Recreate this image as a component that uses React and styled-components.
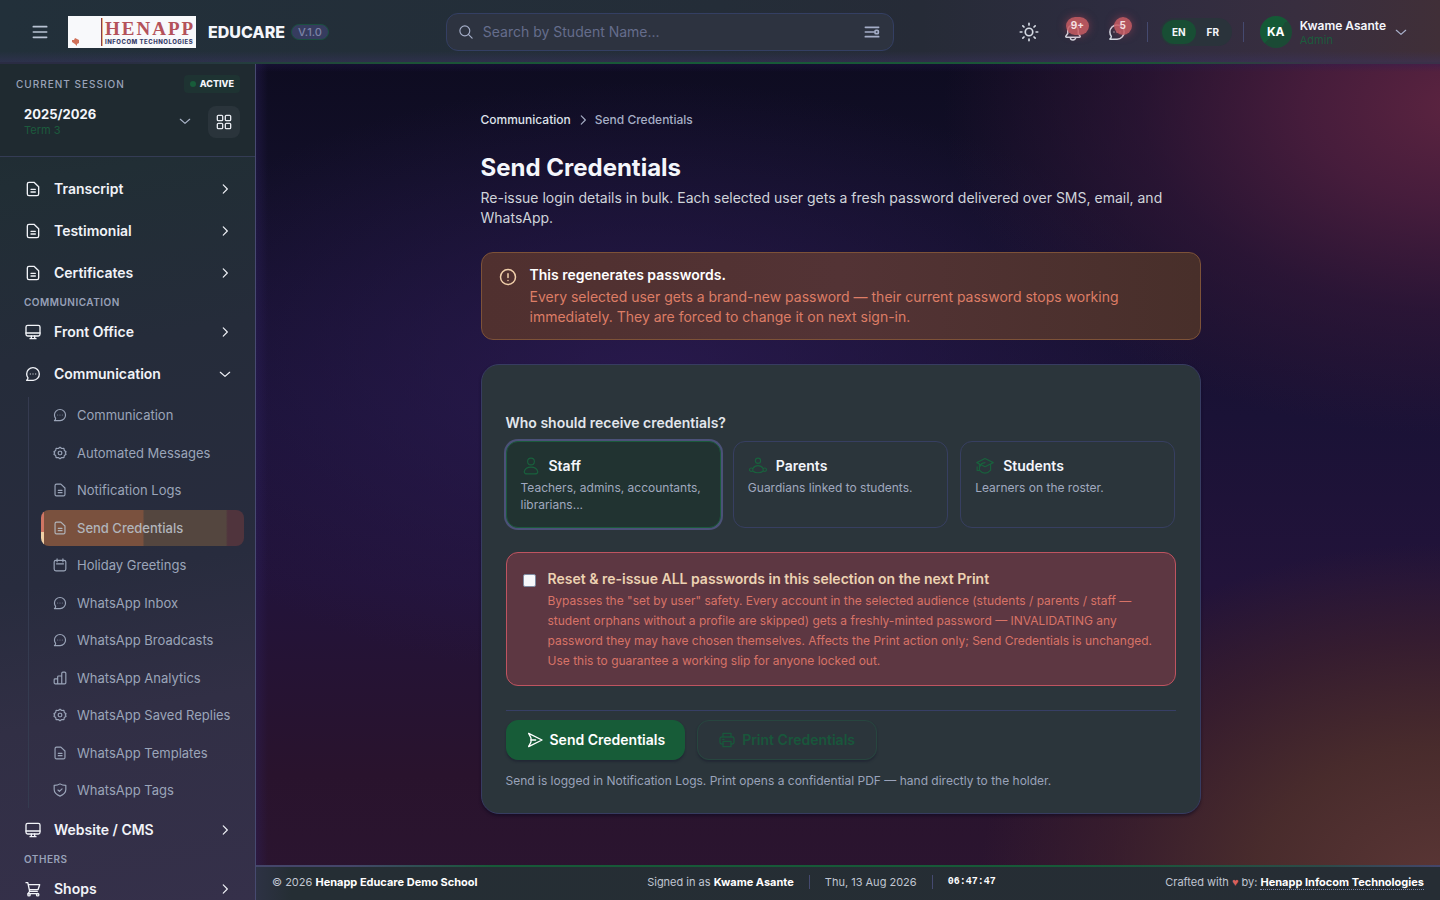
import React from 'react'
import styled, { createGlobalStyle, css } from 'styled-components'

const GlobalStyle = createGlobalStyle`
  *, *::before, *::after {
    box-sizing: border-box;
  }
  body {
    margin: 0;
    font-family: Inter, 'Liberation Sans', sans-serif;
    font-size: 14px;
    line-height: 20px;
    color: #f4f6fb;
    background: #120f28;
  }
  button, input {
    font: inherit;
    color: inherit;
  }
  button {
    margin: 0;
    padding: 0;
    border: 0;
    background: none;
    cursor: pointer;
  }
  a {
    color: inherit;
    text-decoration: none;
  }
  h1, p, ul, fieldset {
    margin: 0;
    padding: 0;
    border: 0;
  }
  ul {
    list-style: none;
  }
`

/* icons */

const Svg = styled.svg`
  display: block;
  flex: none;
  fill: none;
  stroke: currentColor;
  stroke-linecap: round;
  stroke-linejoin: round;
`

const paths = {
  menu: <path d="M2 4h20M2 12h20M2 20h20" />,
  search: (
    <>
      <circle cx="10" cy="10" r="8.5" />
      <path d="m16.500 16.500 6 6" />
    </>
  ),
  filter: (
    <>
      <path d="M2 5h20M2 12h13M2 19h20" />
      <rect x="16.5" y="9.5" width="5" height="5" rx="1.5" />
    </>
  ),
  sun: (
    <>
      <circle cx="12" cy="12" r="4.5" />
      <path d="M12 1.5v2M12 20.5v2M1.5 12h2M20.5 12h2M4.600 4.600 6 6M18 18l1.400 1.400M4.600 19.400 6 18M18 6l1.400-1.400" />
    </>
  ),
  bell: (
    <>
      <path d="M12 2.5a7 7 0 0 0-7 7V14l-2.500 3.500c-.4.8 0 1.500 1 1.500h17c1 0 1.400-.7 1-1.500L19 14V9.500a7 7 0 0 0-7-7Z" />
      <path d="M8.500 19.500a3.500 3 0 0 0 7 0" />
    </>
  ),
  message: (
    <>
      <path d="M2.500 21.500h9.700A9.500 9.500 0 1 0 2.500 12c0 2.300.7 4.200 2 5.800 0 1.300-.8 2.700-2 3.700Z" />
      <path d="M8 12h.01M12 12h.01M16 12h.01" opacity=".7" />
    </>
  ),
  right: <path d="m9 5 7 7-7 7" />,
  down: <path d="m4 9 8 7 8-7" />,
  grid: (
    <>
      <rect x="2" y="2" width="8" height="8" rx="1.5" />
      <rect x="14" y="2" width="8" height="8" rx="1.5" />
      <rect x="2" y="14" width="8" height="8" rx="1.5" />
      <rect x="14" y="14" width="8" height="8" rx="1.5" />
    </>
  ),
  file: (
    <>
      <path d="M3.500 4.500A2.500 2.500 0 0 1 6 2h7.500L20.500 8.500v11A2.500 2.500 0 0 1 18 22H6a2.500 2.500 0 0 1-2.500-2.500Z" />
      <path d="M9 12.500h6.500M9 16.500h6.500" />
    </>
  ),
  monitor: (
    <>
      <rect x="1.5" y="2" width="21" height="16" rx="2.5" />
      <path d="M1.500 13.500h21M9.500 18v4M14.500 18v4M7.500 22h9" />
    </>
  ),
  gear: (
    <>
      <path d="m12 2 3 2.300 3.700-.3.7 3.700 3 2.300-1.500 2 1.500 2-3 2.300-.7 3.700-3.700-.3L12 22l-3-2.300-3.700.3-.7-3.700-3-2.300 1.500-2-1.500-2 3-2.300.7-3.700 3.700.3Z" />
      <rect x="9" y="9" width="6" height="6" rx="2" />
    </>
  ),
  calendar: (
    <>
      <rect x="2" y="4" width="20" height="18" rx="3" />
      <path d="M7 1.500v5M17 1.500v5M6 10h12" />
    </>
  ),
  chart: (
    <path d="M2 15a1.500 1.500 0 0 1 1.500-1.500H8V22H4a2 2 0 0 1-2-2ZM8 10a1.500 1.500 0 0 1 1.500-1.500H15V22H8ZM15 4a2 2 0 0 1 2-2h3a2 2 0 0 1 2 2v16a2 2 0 0 1-2 2h-5Z" />
  ),
  shield: (
    <>
      <path d="M12 1.500c3 2 6 2.500 10 2.500v7c0 5.500-4.500 9-10 11.500C6.500 20 2 16.500 2 11V4c4 0 7-.5 10-2.500Z" />
      <path d="m8.500 12 2.500 2.500 4.500-4.500" />
    </>
  ),
  cart: (
    <>
      <path d="M1.500 2.500h2.700L7 15.500h11.500M5 5.500h17L19.500 13H6.500M7 15.500l-2.500 3.500H19" />
      <circle cx="6" cy="20.500" r="1.800" />
      <circle cx="19" cy="20.500" r="1.800" />
    </>
  ),
  alert: (
    <>
      <circle cx="12" cy="12" r="10" />
      <path d="M12 7.500v5M12 16.500v.01" />
    </>
  ),
  staff: (
    <>
      <circle cx="12" cy="6" r="4.500" />
      <path d="M3 19.500c1-4 5-6 9-6s8 2 9 6c0 2-2 3-4 3H7c-2 0-4-1-4-3Z" />
    </>
  ),
  parents: (
    <>
      <circle cx="12" cy="5" r="3.500" />
      <path d="M5 15.500c1.500-2.500 4-4 7-4s5.500 1.500 7 4M5.500 19c1.500 1.500 3.500 2 6.500 2s5-.5 6.500-2" />
      <circle cx="3" cy="17" r="2.300" />
      <circle cx="21" cy="17" r="2.300" />
    </>
  ),
  students: (
    <>
      <path d="M12 2 23 7.500 12 13 1 7.500ZM4.500 9.500v8c2 2.500 4.500 4 7.500 4s5.500-1.500 7.500-4v-8" />
      <path d="M12 7.500c-4 .5-6 2-6.500 5M1.500 13v5h3" />
    </>
  ),
  send: (
    <>
      <path d="M2.500 2 22.500 12l-20 10L6 15V9Z" />
      <path d="M6 12h7" />
    </>
  ),
  printer: (
    <>
      <path d="M6 7V2h12v5M6 18H4a2.500 2.500 0 0 1-2.500-2.500V10A2.500 2.500 0 0 1 4 7.500h16a2.500 2.500 0 0 1 2.500 2.500v5.500A2.500 2.500 0 0 1 20 18h-2" />
      <path d="M6 14h12v8H6ZM5.500 11h2" />
    </>
  ),
}

const Icon = ({ name, size = 16, weight = 2 }) => (
  <Svg width={size} height={size} viewBox="0 0 24 24" strokeWidth={weight} aria-hidden="true">
    {paths[name]}
  </Svg>
)

/* page frame */

const Page = styled.div`
  display: grid;
  grid-template-columns: 256px minmax(0, 1fr);
  grid-template-rows: 64px minmax(0, 1fr);
  height: 100vh;
  overflow: hidden;
`

const Header = styled.header`
  grid-column: 1 / -1;
  display: flex;
  align-items: center;
  justify-content: space-between;
  padding: 0 32px;
  background:
    linear-gradient(90deg, #2a2c43 8%, #1d5237 28%, #175a38 50%, #1d5237 80%, #3a3149 92%) bottom / 100% 2px no-repeat,
    linear-gradient(180deg, transparent 80%, rgba(60, 52, 100, 0.5)),
    linear-gradient(90deg, #22303a 0%, #242d38 50%, #262b37 64%, #2e2c40 78%, #382e3f 90%, #402f38 100%);
`

const HeaderSide = styled.div`
  display: flex;
  align-items: center;
`

const MenuButton = styled.button`
  margin-right: 20px;
  color: #b9c3d4;
`

const Brand = styled.a`
  display: flex;
  align-items: center;
  gap: 12px;
  font-size: 16px;
  font-weight: 800;
`

const LogoBox = styled.svg`
  display: block;
  width: 128px;
  height: 32px;
`

const Version = styled.span`
  margin-left: 6px;
  padding: 0 6px;
  border: 1px solid #1b4f40;
  border-radius: 8px;
  background: #363c5f;
  color: #7c83a6;
  font-size: 11px;
  font-weight: 500;
  line-height: 14px;
`

const Search = styled.label`
  flex: 0 1 448px;
  display: flex;
  align-items: center;
  gap: 10px;
  height: 38px;
  padding: 0 13px 0 12px;
  border: 1px solid #343f63;
  border-radius: 12px;
  background: #2d3340;
  color: #a5aec8;
`

const SearchInput = styled.input`
  flex: 1;
  min-width: 0;
  padding: 0;
  border: 0;
  outline: 0;
  background: none;
  &::placeholder {
    color: #656d8c;
    opacity: 1;
  }
`

const HeaderIcons = styled.div`
  display: flex;
  gap: 24px;
  margin-right: 20px;
  padding-left: 8px;
`

const IconButton = styled.button`
  position: relative;
  display: grid;
  place-items: center;
  width: 20px;
  height: 20px;
  color: #d5dae3;
`

const Count = styled.span`
  position: absolute;
  top: -5px;
  left: ${(p) => (p.$wide ? '3px' : '7px')};
  min-width: 18px;
  height: 18px;
  padding: 0 5px;
  border-radius: 9px;
  background: rgba(201, 92, 99, 0.86);
  box-shadow: 0 0 8px rgba(190, 70, 90, 0.5);
  color: #f3dfe0;
  font-size: 10px;
  font-weight: 700;
  line-height: 17px;
`

const Rule = styled.span`
  width: 1px;
  height: ${(p) => (p.$short ? '14px' : '20px')};
  background: #454a70;
`

const Languages = styled.div`
  display: flex;
  margin: 0 11px 0 12px;
  padding: 2px;
  border-radius: 14px;
  background: #2a333b;
`

const Language = styled.button`
  width: 34px;
  height: 24px;
  border-radius: 12px;
  background: ${(p) => (p.$on ? '#184e34' : 'transparent')};
  font-size: 10px;
  font-weight: 700;
`

const UserButton = styled.button`
  display: flex;
  align-items: center;
  gap: 8px;
  margin-left: 16px;
  color: #aab2cc;
  text-align: left;
`

const Avatar = styled.span`
  width: 32px;
  height: 32px;
  border-radius: 50%;
  background: linear-gradient(135deg, #145a36 50%, #1b4a35 50%);
  color: #fff;
  font-size: 12px;
  font-weight: 700;
  line-height: 32px;
  text-align: center;
`

const Stack = styled.span`
  display: flex;
  flex-direction: column;
  color: #f4f6fb;
  font-size: 12px;
  font-weight: 600;
  line-height: 16px;
  small {
    color: #1c5b3d;
    font-size: 11px;
    font-weight: 400;
    line-height: 12px;
  }
`

/* sidebar */

const Sidebar = styled.aside`
  min-width: 0;
  overflow: hidden;
  border-right: 1px solid #474a70;
  background: linear-gradient(170deg, #1f2a30 0%, #212e35 14%, #252c3a 34%, #282c3e 60%, #312f45 76%, #35304a 100%);
`

const Session = styled.section`
  padding: 11px 15px 18px 16px;
  border-bottom: 1px solid #343c55;
  background: #1f2a30;
`

const SessionRow = styled.div`
  display: flex;
  align-items: center;
  justify-content: space-between;
`

const Caption = styled.span`
  color: #9aa3b9;
  font-size: 10px;
  font-weight: 500;
  letter-spacing: 1px;
  line-height: 18px;
`

const ActiveTag = styled.span`
  display: flex;
  align-items: center;
  gap: 4px;
  padding: 0 6px;
  border-radius: 4px;
  background: #1e3332;
  font-size: 9px;
  font-weight: 800;
  line-height: 18px;
  &::before {
    content: '';
    width: 6px;
    height: 6px;
    border-radius: 50%;
    background: #185c3a;
  }
`

const SessionPicker = styled.button`
  flex: 1;
  display: flex;
  align-items: center;
  justify-content: space-between;
  padding: 13px 16px 2px 8px;
  color: #aab4c8;
  text-align: left;
  ${Stack} {
    gap: 2px;
    font-size: 13px;
    font-weight: 700;
  }
`

const GridButton = styled.button`
  display: grid;
  place-items: center;
  width: 32px;
  height: 32px;
  margin-top: 13px;
  border-radius: 8px;
  background: #2a343b;
  color: #e6e9ef;
`

const Nav = styled.nav`
  padding-top: 11px;
`

const NavItem = styled.button`
  display: flex;
  align-items: center;
  gap: 13px;
  width: 100%;
  height: 42px;
  padding: 0 23px 0 25px;
  color: #f1f3f8;
  font-weight: 600;
  text-align: left;
  span {
    flex: 1;
  }
`

const NavHeading = styled.div`
  padding-left: 24px;
  color: #98a1b8;
  font-size: 10px;
  font-weight: 600;
  letter-spacing: 0.05em;
  line-height: 17px;
`

const SubNav = styled.ul`
  display: flex;
  flex-direction: column;
  justify-content: space-between;
  min-height: 411px;
  margin: 2px 11px 1px 28px;
  padding-left: 12px;
  border-left: 1px solid #353b50;
`

const SubLink = styled.a`
  display: flex;
  align-items: center;
  gap: 10px;
  height: 36px;
  padding-left: 12px;
  border-radius: 8px;
  color: #9ba5b9;
  font-size: 13px;
  ${(p) =>
    p.$active &&
    css`
      background:
        linear-gradient(180deg, #cf7563 60%, #f0cfa5 60%) left / 3px 100% no-repeat,
        linear-gradient(90deg, #7a513e 50%, #54463f 51%, #54463f 91%, #50343d 92%);
      color: #b1b5bb;
      font-weight: 500;
    `}
`

/* content */

const Content = styled.div`
  display: flex;
  flex-direction: column;
  min-width: 0;
  background:
    linear-gradient(180deg, rgba(40, 26, 90, 0.3), transparent 8px),
    linear-gradient(90deg, rgba(48, 36, 100, 0.35), transparent 12px),
    radial-gradient(ellipse 460px 340px at 100% 98%, #5a3635 0%, rgba(76, 46, 44, 0.9) 40%, rgba(64, 34, 44, 0.6) 72%, transparent 100%),
    radial-gradient(ellipse 520px 330px at 102% 5%, #5c2440 0%, rgba(76, 30, 62, 0.9) 30%, rgba(56, 24, 58, 0.6) 62%, transparent 100%),
    radial-gradient(ellipse 560px 300px at 33% 38%, rgba(44, 27, 82, 0.8), transparent 100%),
    linear-gradient(180deg, #0e0c21 0%, #120f28 14%, #1a1236 42%, #22133a 62%, #29132d 85%, #2b1530 100%);
`

const Main = styled.main`
  flex: 1;
  min-height: 0;
  padding: 46px 15px 0 0;
`

const Column = styled.div`
  max-width: 720px;
  margin: 0 auto;
`

const Crumbs = styled.nav`
  display: flex;
  align-items: center;
  gap: 5px;
  color: #a6aec5;
  font-size: 12px;
  font-weight: 500;
  a {
    color: #dfe3eb;
  }
`

const Title = styled.h1`
  margin-top: 20px;
  font-size: 24px;
  font-weight: 700;
  line-height: 36px;
`

const Lead = styled.p`
  margin-top: 2px;
  color: #d0d4da;
`

const Notice = styled.section`
  display: flex;
  gap: 13px;
  margin: 24px 0;
  padding: 12px 17px;
  border: 1px solid #7d5238;
  border-radius: 12px;
  background: linear-gradient(90deg, #50302f 0%, #533335 50%, #482f2a 100%);
  color: #f1cfaa;
  svg {
    margin-top: 3px;
  }
`

const NoticeText = styled.p`
  color: #dd7d66;
  strong {
    display: block;
    margin-bottom: 2px;
    color: #fff;
    font-weight: 600;
  }
`

const Card = styled.form`
  padding: 48px 24px 22px;
  border: 1px solid #373c61;
  border-radius: 18px;
  background: #2b353b;
  box-shadow: 0 2px 3px rgba(10, 8, 30, 0.5);
`

const Legend = styled.legend`
  padding: 0;
  margin-bottom: 8px;
  color: #e2e6ec;
  font-weight: 600;
`

const Audiences = styled.div`
  display: grid;
  grid-template-columns: repeat(3, minmax(0, 1fr));
  gap: 12px;
`

const Audience = styled.button`
  display: flex;
  flex-direction: column;
  min-height: 87px;
  padding: 14px 14px 13px;
  border: 1px solid ${(p) => (p.$on ? '#1b5a3c' : '#373f61')};
  border-radius: 12px;
  background: ${(p) => (p.$on ? '#213331' : 'transparent')};
  box-shadow: ${(p) => (p.$on ? '0 0 0 2px #4b5178' : 'none')};
  color: #a0a9bf;
  font-size: 12px;
  line-height: 17px;
  text-align: left;
`

const AudienceName = styled.span`
  display: flex;
  align-items: center;
  gap: 9px;
  padding-left: 1px;
  margin-bottom: 3px;
  color: #19613d;
  font-size: 14px;
  font-weight: 600;
  line-height: 20px;
  b {
    color: #f4f6fb;
    font-weight: 600;
  }
`

const Danger = styled.label`
  display: flex;
  gap: 12px;
  margin-top: 24px;
  padding: 16px 16px 14px;
  border: 1px solid #bf5460;
  border-radius: 12px;
  background: #5d3742;
  color: #d87367;
  font-size: 12px;
  line-height: 20px;
  strong {
    display: block;
    margin-bottom: 2px;
    color: #ecd2b2;
    font-size: 14px;
    font-weight: 600;
  }
`

const Check = styled.input`
  flex: none;
  appearance: none;
  width: 13px;
  height: 13px;
  margin: 5px 0 0;
  border: 1px solid #7d8aa0;
  border-radius: 2px;
  background: #f6f8fb;
`

const Actions = styled.div`
  display: flex;
  gap: 12px;
  margin-top: 24px;
  padding-top: 9px;
  border-top: 1px solid #373f66;
`

const Button = styled.button`
  display: flex;
  align-items: center;
  justify-content: center;
  gap: 7px;
  height: 40px;
  padding: ${(p) => (p.$primary ? '0 19px 0 20px' : '0 21px')};
  border: 1px solid ${(p) => (p.$primary ? '#175c38' : '#27463f')};
  border-radius: 12px;
  background: ${(p) => (p.$primary ? '#175c38' : 'transparent')};
  box-shadow: 0 2px 2px rgba(28, 34, 48, 0.6);
  color: ${(p) => (p.$primary ? '#fff' : '#19573b')};
  font-weight: 600;
`

const Hint = styled.p`
  margin-top: 11px;
  color: #9aa3ba;
  font-size: 12px;
`

const Footer = styled.footer`
  display: flex;
  align-items: center;
  justify-content: space-between;
  height: 35px;
  padding: 0 16px 2px;
  background:
    linear-gradient(90deg, #44466a 8%, #175a38 20%, #175a38 70%, #2c4a47 90%, #44466a) top / 100% 2px no-repeat,
    linear-gradient(90deg, #2d3244 0%, #252e34 3%, #262d34 100%);
  color: #c0c6d2;
  font-size: 11px;
  strong, a {
    color: #fff;
    font-weight: 700;
  }
  a {
    border-bottom: 1px dotted #7c85a8;
  }
`

const FooterGroup = styled.div`
  display: flex;
  align-items: center;
  gap: 15px;
`

const Clock = styled.time`
  color: #fff;
  font-family: 'Liberation Mono', monospace;
  font-size: 10px;
  font-weight: 700;
`

const Credit = styled.div`
  span {
    color: #d8605c;
    font-family: 'Liberation Sans', sans-serif;
  }
`

const subLinks = [
  ['message', 'Communication'],
  ['gear', 'Automated Messages'],
  ['file', 'Notification Logs'],
  ['file', 'Send Credentials'],
  ['calendar', 'Holiday Greetings'],
  ['message', 'WhatsApp Inbox'],
  ['message', 'WhatsApp Broadcasts'],
  ['chart', 'WhatsApp Analytics'],
  ['gear', 'WhatsApp Saved Replies'],
  ['file', 'WhatsApp Templates'],
  ['shield', 'WhatsApp Tags'],
]

const audiences = [
  ['staff', 'Staff', 'Teachers, admins, accountants, librarians...'],
  ['parents', 'Parents', 'Guardians linked to students.'],
  ['students', 'Students', 'Learners on the roster.'],
]

const Logo = () => (
  <LogoBox viewBox="0 0 128 32" role="img" aria-label="Henapp Infocom Technologies">
    <rect width="128" height="32" fill="#f8f9fb" />
    <path d="M4 24h2l1-2 2 1 2 1v3l-2 1v2l-2-2-3-2Z" fill="#cf7058" />
    <path d="M33.500 2v28" stroke="#8c3c48" />
    <path d="M34.500 2v28" stroke="#e8b480" />
    <text x="37" y="19" fill="#b4525a" fontFamily="Liberation Serif, serif" fontSize="19" fontWeight="700" letterSpacing="2">
      HENAPP
    </text>
    <text x="37" y="28" fill="#3a3f6b" fontFamily="Inter, sans-serif" fontSize="6" fontWeight="800" letterSpacing="0.5">
      INFOCOM TECHNOLOGIES
    </text>
  </LogoBox>
)

const Row = ({ icon, children, open }) => (
  <NavItem type="button" aria-expanded={!!open}>
    <Icon name={icon} />
    <span>{children}</span>
    <Icon name={open ? 'down' : 'right'} size={14} />
  </NavItem>
)

const App = () => (
  <>
    <GlobalStyle />
    <Page>
      <Header>
        <HeaderSide>
          <MenuButton type="button" aria-label="Toggle menu">
            <Icon name="menu" weight={2.5} />
          </MenuButton>
          <Brand href="#">
            <Logo />
            EDUCARE
          </Brand>
          <Version>V.1.0</Version>
        </HeaderSide>
        <Search>
          <Icon name="search" size={14} />
          <SearchInput type="text" aria-label="Search" placeholder="Search by Student Name..." />
          <Icon name="filter" weight={2.5} />
        </Search>
        <HeaderSide>
          <HeaderIcons>
            <IconButton type="button" aria-label="Theme">
              <Icon name="sun" size={20} />
            </IconButton>
            <IconButton type="button" aria-label="Notifications">
              <Icon name="bell" size={18} />
              <Count $wide>9+</Count>
            </IconButton>
            <IconButton type="button" aria-label="Messages">
              <Icon name="message" size={18} />
              <Count>5</Count>
            </IconButton>
          </HeaderIcons>
          <Rule />
          <Languages>
            <Language type="button" $on>EN</Language>
            <Language type="button">FR</Language>
          </Languages>
          <Rule />
          <UserButton type="button">
            <Avatar>KA</Avatar>
            <Stack>
              Kwame Asante
              <small>Admin</small>
            </Stack>
            <Icon name="down" size={14} />
          </UserButton>
        </HeaderSide>
      </Header>

      <Sidebar>
        <Session>
          <SessionRow>
            <Caption>CURRENT SESSION</Caption>
            <ActiveTag>ACTIVE</ActiveTag>
          </SessionRow>
          <SessionRow>
            <SessionPicker type="button">
              <Stack>
                2025/2026
                <small>Term 3</small>
              </Stack>
              <Icon name="down" size={14} />
            </SessionPicker>
            <GridButton type="button" aria-label="Modules">
              <Icon name="grid" />
            </GridButton>
          </SessionRow>
        </Session>
        <Nav>
          <Row icon="file">Transcript</Row>
          <Row icon="file">Testimonial</Row>
          <Row icon="file">Certificates</Row>
          <NavHeading>COMMUNICATION</NavHeading>
          <Row icon="monitor">Front Office</Row>
          <Row icon="message" open>Communication</Row>
          <SubNav>
            {subLinks.map(([icon, label]) => (
              <li key={label}>
                <SubLink href="#" $active={label === 'Send Credentials'}>
                  <Icon name={icon} size={14} />
                  {label}
                </SubLink>
              </li>
            ))}
          </SubNav>
          <Row icon="monitor">Website / CMS</Row>
          <NavHeading>OTHERS</NavHeading>
          <Row icon="cart">Shops</Row>
        </Nav>
      </Sidebar>

      <Content>
        <Main>
          <Column>
            <Crumbs>
              <a href="#">Communication</a>
              <Icon name="right" size={14} />
              <span>Send Credentials</span>
            </Crumbs>
            <Title>Send Credentials</Title>
            <Lead>
              Re-issue login details in bulk. Each selected user gets a fresh password delivered over SMS, email, and
              WhatsApp.
            </Lead>
            <Notice>
              <Icon name="alert" size={18} />
              <NoticeText>
                <strong>This regenerates passwords.</strong>
                Every selected user gets a brand-new password — their current password stops working immediately. They
                are forced to change it on next sign-in.
              </NoticeText>
            </Notice>
            <Card>
              <fieldset>
                <Legend>Who should receive credentials?</Legend>
                <Audiences>
                  {audiences.map(([icon, name, text]) => (
                    <Audience key={name} type="button" $on={name === 'Staff'}>
                      <AudienceName>
                        <Icon name={icon} size={18} weight={1.5} />
                        <b>{name}</b>
                      </AudienceName>
                      {text}
                    </Audience>
                  ))}
                </Audiences>
              </fieldset>
              <Danger>
                <Check type="checkbox" />
                <span>
                  <strong>Reset &amp; re-issue ALL passwords in this selection on the next Print</strong>
                  Bypasses the "set by user" safety. Every account in the selected audience (students / parents / staff
                  — student orphans without a profile are skipped) gets a freshly-minted password — INVALIDATING any
                  password they may have chosen themselves. Affects the Print action only; Send Credentials is
                  unchanged. Use this to guarantee a working slip for anyone locked out.
                </span>
              </Danger>
              <Actions>
                <Button type="button" $primary>
                  <Icon name="send" />
                  Send Credentials
                </Button>
                <Button type="button">
                  <Icon name="printer" />
                  Print Credentials
                </Button>
              </Actions>
              <Hint>Send is logged in Notification Logs. Print opens a confidential PDF — hand directly to the holder.</Hint>
            </Card>
          </Column>
        </Main>
        <Footer>
          <div>
            © 2026 <strong>Henapp Educare Demo School</strong>
          </div>
          <FooterGroup>
            <span>
              Signed in as <strong>Kwame Asante</strong>
            </span>
            <Rule $short />
            <span>Thu, 13 Aug 2026</span>
            <Rule $short />
            <Clock>06:47:47</Clock>
          </FooterGroup>
          <Credit>
            Crafted with <span>♥</span> by: <a href="#">Henapp Infocom Technologies</a>
          </Credit>
        </Footer>
      </Content>
    </Page>
  </>
)

export default App
